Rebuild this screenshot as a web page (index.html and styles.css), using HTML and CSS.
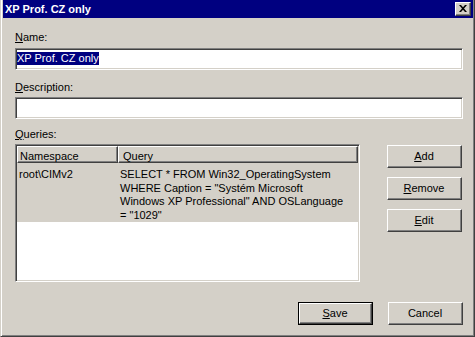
FILE: index.html
```html
<!DOCTYPE html>
<html>
<head>
<meta charset="utf-8">
<link rel="stylesheet" href="styles.css">
</head>
<body>
<div class="window">
  <div class="titlebar">
    <span class="title">XP Prof. CZ only</span>
    <div class="close">
      <svg width="8" height="7" viewBox="0 0 8 7"><path d="M0 0h2l2 2.2L6 0h2L5 3.5 8 7H6L4 4.8 2 7H0l3-3.5z" fill="#000"/></svg>
    </div>
  </div>
  <div class="content">
    <div class="label label-name"><u>N</u>ame:</div>
    <div class="field field-name"><span class="sel">XP Prof. CZ only</span></div>
    <div class="label label-desc"><u>D</u>escription:</div>
    <div class="field field-desc"></div>
    <div class="label label-q"><u>Q</u>ueries:</div>
    <div class="queries">
      <div class="list">
        <div class="list-head">
          <div class="hcell hcell-ns">Namespace</div>
          <div class="hcell hcell-q">Query</div>
        </div>
        <div class="row">
          <div class="cell-ns">root\CIMv2</div>
          <div class="cell-q">SELECT * FROM Win32_OperatingSystem<br>WHERE Caption = "Systém Microsoft<br>Windows XP Professional" AND OSLanguage<br>= "1029"</div>
        </div>
      </div>
      <div class="side">
        <div class="btn"><u>A</u>dd</div>
        <div class="btn"><u>R</u>emove</div>
        <div class="btn"><u>E</u>dit</div>
      </div>
    </div>
    <div class="footer">
      <div class="btn btn-default"><span class="btn-inner"><u>S</u>ave</span></div>
      <div class="btn">Cancel</div>
    </div>
  </div>
</div>
</body>
</html>
```
FILE: styles.css
```css
html, body {
  margin: 0;
  padding: 0;
  background: #d4d0c8;
}
body {
  font-family: "Liberation Sans", Arial, sans-serif;
  font-size: 11px;
  line-height: 13px;
  color: #000;
}
.window {
  box-sizing: border-box;
  width: 475px;
  height: 337px;
  background: #d4d0c8;
  border: 1px solid;
  border-top: 0;
  border-color: #d4d0c8 #404040 #404040 #d4d0c8;
  box-shadow: inset 1px 0 #fff, inset -1px -1px #808080;
  padding: 0 1px 1px 1px;
  margin-left: 0;
  padding-left: 2px;
}
.titlebar {
  height: 18px;
  background: #000080;
  display: flex;
  align-items: center;
  justify-content: space-between;
  padding: 0 2px 0 2px;
}
.title {
  color: #fff;
  font-weight: bold;
  font-size: 11px;
  line-height: 13px;
  padding-top: 1px;
}
.close {
  box-sizing: border-box;
  width: 16px;
  height: 14px;
  background: #d4d0c8;
  border: 1px solid;
  border-color: #fff #404040 #404040 #fff;
  box-shadow: inset -1px -1px #808080;
  display: flex;
  align-items: center;
  justify-content: center;
  padding: 0 1px 1px 0;
}
.close svg { display: block; }
.content {
  padding: 0 10px 0 12px;
}
.label {
  height: 13px;
}
.label-name { margin-top: 13px; }
.label-desc { margin-top: 11px; }
.label-q { margin-top: 9px; }
.field {
  box-sizing: border-box;
  height: 22px;
  background: #fff;
  border: 1px solid;
  border-color: #808080 #fff #fff #808080;
  box-shadow: inset 1px 1px #404040, inset -1px -1px #d4d0c8;
  padding: 3px 0 0 1px;
}
.field-name { margin-top: 4px; }
.field-desc { margin-top: 3px; }
.sel {
  display: inline-block;
  background: #000080;
  color: #fff;
  line-height: 13px;
  height: 13px;
}
.queries {
  margin-top: 3px;
  display: flex;
  gap: 27px;
}
.list {
  box-sizing: border-box;
  width: 345px;
  height: 138px;
  background: #fff;
  border: 1px solid;
  border-color: #808080 #fff #fff #808080;
  box-shadow: inset 1px 1px #404040, inset -1px -1px #d4d0c8;
  padding: 1px;
}
.list-head {
  display: flex;
  height: 17px;
}
.hcell {
  box-sizing: border-box;
  height: 17px;
  background: #d4d0c8;
  border: 1px solid;
  border-color: #fff #404040 #404040 #fff;
  box-shadow: inset -1px -1px #808080;
  padding-top: 3px;
  line-height: 12px;
  white-space: nowrap;
}
.hcell-ns {
  width: 101px;
  padding-left: 2px;
}
.hcell-q {
  flex: 1;
  padding-left: 4px;
}
.row {
  display: flex;
  background: #d4d0c8;
  padding-top: 5px;
  line-height: 13.5px;
}
.cell-ns {
  width: 101px;
  padding-left: 2px;
  box-sizing: border-box;
}
.cell-q {
  flex: 1;
  padding-left: 2px;
  white-space: nowrap;
}
.side {
  margin-top: 1px;
  display: flex;
  flex-direction: column;
  gap: 9px;
}
.btn {
  box-sizing: border-box;
  width: 75px;
  height: 23px;
  background: #d4d0c8;
  border: 1px solid;
  border-color: #fff #404040 #404040 #fff;
  box-shadow: inset -1px -1px #808080;
  display: flex;
  align-items: center;
  justify-content: center;
  padding: 0 1px 1px 0;
}
.btn-default {
  border: 1px solid #000;
  box-shadow: none;
  padding: 0;
}
.btn-inner {
  box-sizing: border-box;
  width: 100%;
  height: 100%;
  border: 1px solid;
  border-color: #fff #404040 #404040 #fff;
  box-shadow: inset -1px -1px #808080;
  display: flex;
  align-items: center;
  justify-content: center;
  padding: 0 1px 1px 0;
}
.footer {
  margin-top: 20px;
  display: flex;
  justify-content: flex-end;
  gap: 15px;
}
u { text-decoration: underline; text-underline-offset: 1px; }
```
